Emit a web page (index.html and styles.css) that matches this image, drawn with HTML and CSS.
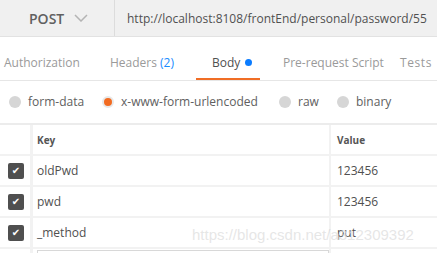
FILE: index.html
```html
<!DOCTYPE html>
<html lang="en">
<head>
    <meta charset="UTF-8">
    <title>POST request</title>
    <link rel="stylesheet" href="styles.css">
</head>
<body>
    <div class="topbar">
        <div class="method">POST
            <svg class="chev" width="14" height="8" viewBox="0 0 14 8"><path d="M1 1 L7 7 L13 1" fill="none" stroke="#b4b4b4" stroke-width="1.5"/></svg>
        </div>
        <div class="url">http://localhost:8108/frontEnd/personal/password/55</div>
    </div>
    <div class="tabs">
        <span class="tab tab-auth">Authorization</span>
        <span class="tab tab-headers">Headers <span class="count">(2)</span></span>
        <span class="tab tab-body active">Body <span class="dot"></span></span>
        <span class="tab tab-pre">Pre-request Script</span>
        <span class="tab tab-tests">Tests</span>
    </div>
    <div class="modes">
        <label class="mode m-form"><span class="radio"></span>form-data</label>
        <label class="mode m-url"><span class="radio on"></span>x-www-form-urlencoded</label>
        <label class="mode m-raw"><span class="radio"></span>raw</label>
        <label class="mode m-bin"><span class="radio"></span>binary</label>
    </div>
    <div class="grid">
        <div class="row head">
            <div class="cell chk"></div>
            <div class="cell key">Key</div>
            <div class="cell val">Value</div>
        </div>
        <div class="row">
            <div class="cell chk"><span class="box">&#10004;</span></div>
            <div class="cell key">oldPwd</div>
            <div class="cell val">123456</div>
        </div>
        <div class="row">
            <div class="cell chk"><span class="box">&#10004;</span></div>
            <div class="cell key">pwd</div>
            <div class="cell val">123456</div>
        </div>
        <div class="row">
            <div class="cell chk"><span class="box">&#10004;</span></div>
            <div class="cell key">_method</div>
            <div class="cell val">put</div>
        </div>
        <div class="row new">
            <div class="cell chk"></div>
            <div class="cell key"><span class="newbox"></span></div>
            <div class="cell val"></div>
        </div>
    </div>
    <div class="watermark">https://blog.csdn.net/a312309392</div>
</body>
</html>
```

FILE: styles.css
```css
body {
    margin: 0;
    width: 437px;
    height: 253px;
    overflow: hidden;
    font-family: "Open Sans", sans-serif;
    font-size: 12px;
    color: #505050;
    background: #fff;
    position: relative;
}
.topbar {
    display: flex;
    height: 36px;
    background: #f0f0f0;
    border-bottom: 1px solid #e2e2e2;
}
.method {
    flex-shrink: 0;
    width: 115px;
    box-sizing: border-box;
    border-right: 1px solid #dcdcdc;
    display: flex;
    align-items: center;
    padding-left: 29px;
    font-size: 14px;
    font-weight: 600;
    color: #606060;
}
.chev {
    margin-left: 10px;
}
.url {
    display: flex;
    align-items: center;
    padding-left: 12px;
    white-space: nowrap;
    color: #505050;
}
.tabs {
    height: 43px;
    position: relative;
    border-bottom: 1px solid #e6e6e6;
    white-space: nowrap;
    overflow: hidden;
}
.tab {
    position: absolute;
    top: 17px;
    color: #9a9a9a;
}
.tab-auth { left: 4px; }
.tab-headers { left: 110px; }
.tab-body { left: 212px; color: #505050; }
.tab-pre { left: 283px; }
.tab-tests { left: 400px; letter-spacing: 0.6px; }
.count { color: #1a8cff; }
.dot {
    display: inline-block;
    width: 7px;
    height: 7px;
    border-radius: 50%;
    background: #0b7cff;
    margin-left: 2px;
    vertical-align: 1px;
}
.tab-body::after {
    content: "";
    position: absolute;
    left: -16px;
    right: -8px;
    top: 24px;
    height: 3px;
    background: #f06d25;
}
.modes {
    position: relative;
    border-bottom: 2px solid #ececec;
    box-sizing: border-box;
    height: 44px;
}
.mode {
    position: absolute;
    top: 12px;
    display: flex;
    align-items: center;
    color: #606060;
}
.m-form { left: 9px; }
.m-url { left: 102px; }
.m-raw { left: 279px; }
.m-bin { left: 337px; }
.radio {
    width: 12px;
    height: 12px;
    border-radius: 50%;
    background: #d6d6d6;
    margin-right: 7px;
    box-sizing: border-box;
}
.radio.on {
    background: #f26b21;
    border: 2px solid #e8e8e8;
}
.grid {
    display: flex;
    flex-direction: column;
}
.row {
    display: flex;
    height: 29px;
    border-bottom: 2px solid #f2f2f2;
}
.cell {
    display: flex;
    align-items: center;
    box-sizing: border-box;
}
.chk {
    width: 33px;
    border-right: 3px solid #f2f2f2;
    justify-content: center;
    padding-left: 2px;
}
.key {
    width: 298px;
    padding-left: 4px;
    border-right: 2px solid #f2f2f2;
}
.val {
    flex: 1;
    padding-left: 6px;
}
.head .cell {
    font-size: 10px;
    font-weight: 700;
    color: #555;
}
.box {
    width: 16px;
    height: 16px;
    border-radius: 2px;
    background: #4f4f4f;
    color: #fff;
    font-size: 10px;
    display: flex;
    align-items: center;
    justify-content: center;
    font-family: "DejaVu Sans", sans-serif;
}
.new {
    height: 5px;
    border-bottom: none;
    overflow: hidden;
}
.new .key {
    align-items: flex-start;
    padding-top: 1px;
}
.newbox {
    width: 292px;
    height: 24px;
    border: 1px solid #d8d8d8;
    box-sizing: border-box;
}
.watermark {
    position: absolute;
    left: 192px;
    top: 226px;
    font-family: "Liberation Sans", sans-serif;
    font-size: 15px;
    color: rgba(205, 205, 205, 0.5);
    text-shadow: 1px 1px 0 rgba(255, 255, 255, 0.6);
    white-space: nowrap;
}
```
